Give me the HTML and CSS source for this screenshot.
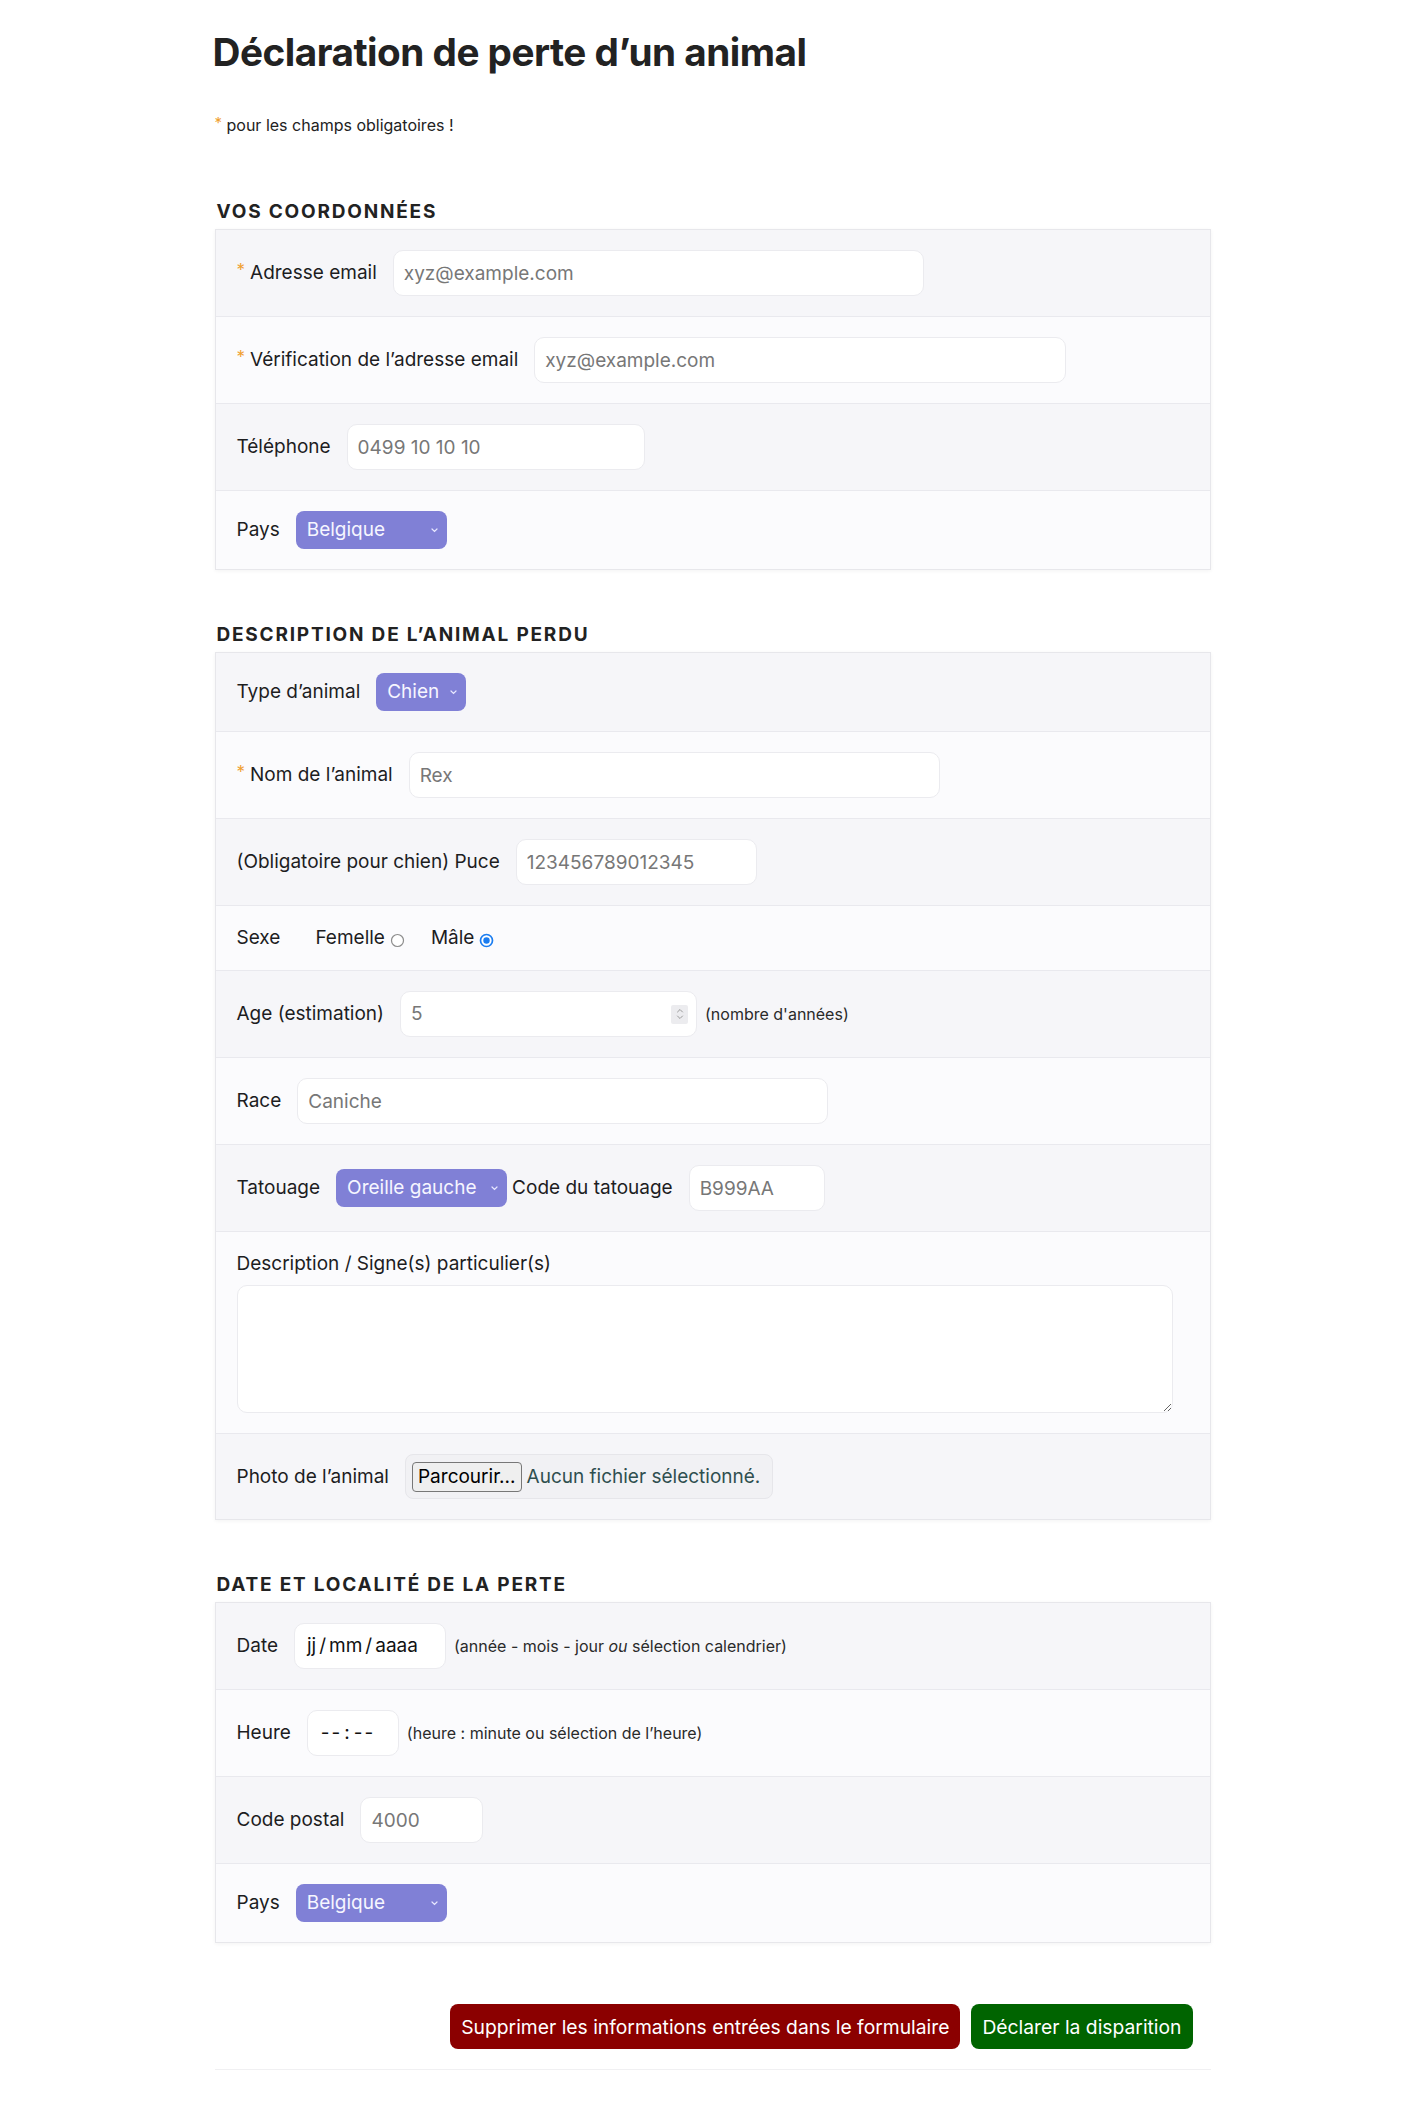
FILE: index.html
```html
<!DOCTYPE html>
<html lang="fr">
<head>
<meta charset="utf-8">
<title>Déclaration de perte d’un animal</title>
<link rel="stylesheet" href="styles.css">
</head>
<body>
<div class="page">
  <h1 class="title">Déclaration de perte d’un animal</h1>
  <p class="note"><span class="req">*</span> pour les champs obligatoires !</p>

  <section class="section">
    <h2 class="section-title">VOS COORDONNÉES</h2>
    <div class="card">
      <div class="row">
        <label class="label"><span class="req">*</span>Adresse email</label>
        <input class="input w-wide" type="text" placeholder="xyz@example.com">
      </div>
      <div class="row">
        <label class="label"><span class="req">*</span>Vérification de l’adresse email</label>
        <input class="input w-wide2" type="text" placeholder="xyz@example.com">
      </div>
      <div class="row">
        <label class="label">Téléphone</label>
        <input class="input w-tel" type="text" placeholder="0499 10 10 10">
      </div>
      <div class="row">
        <label class="label">Pays</label>
        <div class="select w-pays"><span>Belgique</span><svg class="chev" width="7" height="5" viewBox="0 0 7 5"><path d="M1 1l2.5 2.5L6 1" fill="none" stroke="#e8e8ff" stroke-width="1.2" stroke-linecap="round"/></svg></div>
      </div>
    </div>
  </section>

  <section class="section">
    <h2 class="section-title">DESCRIPTION DE L’ANIMAL PERDU</h2>
    <div class="card">
      <div class="row">
        <label class="label">Type d’animal</label>
        <div class="select w-chien"><span>Chien</span><svg class="chev" width="7" height="5" viewBox="0 0 7 5"><path d="M1 1l2.5 2.5L6 1" fill="none" stroke="#e8e8ff" stroke-width="1.2" stroke-linecap="round"/></svg></div>
      </div>
      <div class="row">
        <label class="label"><span class="req">*</span>Nom de l’animal</label>
        <input class="input w-wide" type="text" placeholder="Rex">
      </div>
      <div class="row">
        <label class="label">(Obligatoire pour chien) Puce</label>
        <input class="input w-puce" type="text" placeholder="123456789012345">
      </div>
      <div class="row row-radio">
        <span class="label">Sexe</span>
        <div class="radios">
          <label class="radio">Femelle<svg class="radio-mark" width="15" height="15" viewBox="0 0 15 15"><circle cx="7.5" cy="7.5" r="6" fill="#fff" stroke="#8d8d8d" stroke-width="1.2"/></svg></label>
          <label class="radio">Mâle<svg class="radio-mark" width="15" height="15" viewBox="0 0 15 15"><circle cx="7.5" cy="7.5" r="6" fill="#fff" stroke="#1a7cf0" stroke-width="1.7"/><circle cx="7.5" cy="7.5" r="3.2" fill="#1a7cf0"/></svg></label>
        </div>
      </div>
      <div class="row">
        <label class="label">Age (estimation)</label>
        <div class="input number w-age"><span class="ph">5</span><span class="spin"><svg width="10" height="16" viewBox="0 0 10 16"><path d="M2.5 6l2.5-2.5L7.5 6M2.5 10l2.5 2.5L7.5 10" fill="none" stroke="#9a9a9a" stroke-width="1" stroke-linecap="round" stroke-linejoin="round"/></svg></span></div>
        <span class="hint">(nombre d'années)</span>
      </div>
      <div class="row">
        <label class="label">Race</label>
        <input class="input w-race" type="text" placeholder="Caniche">
      </div>
      <div class="row">
        <label class="label">Tatouage</label>
        <div class="select w-tatoo"><span>Oreille gauche</span><svg class="chev" width="7" height="5" viewBox="0 0 7 5"><path d="M1 1l2.5 2.5L6 1" fill="none" stroke="#e8e8ff" stroke-width="1.2" stroke-linecap="round"/></svg></div>
        <label class="label label-inline">Code du tatouage</label>
        <input class="input w-code" type="text" placeholder="B999AA">
      </div>
      <div class="row row-col">
        <label class="label">Description / Signe(s) particulier(s)</label>
        <textarea class="textarea"></textarea>
      </div>
      <div class="row">
        <label class="label">Photo de l’animal</label>
        <div class="file"><span class="browse">Parcourir...</span><span class="file-text">Aucun fichier sélectionné.</span></div>
      </div>
    </div>
  </section>

  <section class="section">
    <h2 class="section-title">DATE ET LOCALITÉ DE LA PERTE</h2>
    <div class="card">
      <div class="row">
        <label class="label">Date</label>
        <div class="input fake w-date">jj<span class="sl">/</span>mm<span class="sl">/</span>aaaa</div>
        <span class="hint">(année - mois - jour <em>ou</em> sélection calendrier)</span>
      </div>
      <div class="row">
        <label class="label">Heure</label>
        <div class="input fake w-time">--<span class="colon">:</span>--</div>
        <span class="hint">(heure : minute ou sélection de l’heure)</span>
      </div>
      <div class="row">
        <label class="label">Code postal</label>
        <input class="input w-cp" type="text" placeholder="4000">
      </div>
      <div class="row">
        <label class="label">Pays</label>
        <div class="select w-pays"><span>Belgique</span><svg class="chev" width="7" height="5" viewBox="0 0 7 5"><path d="M1 1l2.5 2.5L6 1" fill="none" stroke="#e8e8ff" stroke-width="1.2" stroke-linecap="round"/></svg></div>
      </div>
    </div>
  </section>

  <div class="actions">
    <button class="btn btn-reset" type="button">Supprimer les informations entrées dans le formulaire</button>
    <button class="btn btn-submit" type="button">Déclarer la disparition</button>
  </div>
  <div class="rule"></div>
</div>
</body>
</html>
```

FILE: styles.css
```css
* { box-sizing: border-box; }
html, body { margin: 0; padding: 0; background: #fff; }
body {
  font-family: Inter, "Noto Sans", "Liberation Sans", sans-serif;
  color: #1d1d1f;
}
.page { width: 996px; margin: 0 auto; padding-bottom: 40px; }

.title {
  font-size: 38.7px;
  font-weight: 700;
  line-height: 46px;
  letter-spacing: -0.5px;
  color: #222;
  margin: 29px 0 0 -2px;
}
.note {
  font-size: 16px;
  line-height: 20px;
  margin: 40px 0 0;
  color: #222;
}
.req {
  color: #f0a030;
  font-size: 17px;
  position: relative;
  top: -3px;
  margin-right: 5px;
}
.note .req { margin-right: 0; font-size: 15px; }

.section { margin-top: 54px; }
.note + .section { margin-top: 65px; }
.section-title {
  font-size: 19px;
  line-height: 22px;
  font-weight: 700;
  letter-spacing: 1.8px;
  color: #222;
  margin: 0 0 6px 2px;
}
.card {
  border: 1px solid #e7e7eb;
  box-shadow: 0 1px 4px rgba(0, 0, 0, 0.05);
  background: #fbfbfc;
}
.row {
  display: flex;
  align-items: center;
  padding: 20px 21px;
  font-size: 19px;
  line-height: 24px;
  background: #fbfbfd;
}
.row:nth-child(odd) { background: #f6f6f9; }
.row + .row { border-top: 1px solid #e9e9ee; }
.row-col { display: block; }
.row-col .label { display: block; }

.label { margin-right: 16px; color: #1d1d1f; white-space: nowrap; }
.label-inline { margin-left: 5px; }

.input {
  height: 46px;
  border: 1px solid #ebebef;
  border-radius: 10px;
  background: #fff;
  padding: 0 10px;
  font: inherit;
  font-size: 19px;
  color: #1d1d1f;
  outline: none;
}
.input::placeholder { color: #777; }
.w-wide { width: 531px; }
.w-wide2 { width: 532px; }
.w-tel { width: 298px; }
.w-puce { width: 241px; }
.w-age { width: 297px; }
.w-race { width: 531px; }
.w-code { width: 136px; }
.w-date { width: 152px; }
.w-time { width: 92px; }
.w-cp { width: 123px; }

.number { display: flex; align-items: center; justify-content: space-between; }
.number .ph { color: #777; }
.spin {
  display: flex;
  align-items: center;
  justify-content: center;
  width: 17px;
  height: 19px;
  background: #ececef;
  border-radius: 2px;
  margin-right: -2px;
}
.hint { font-size: 16px; color: #2a2a2a; margin-left: 8px; }
.hint em { font-style: italic; }

.fake { display: flex; align-items: center; color: #111; }
.w-date { padding-left: 12px; }
.sl { margin: 0 3px; }
.w-time { padding-left: 13px; letter-spacing: 2px; }
.colon { margin: 0 2px; }

.select {
  height: 38px;
  border-radius: 8px;
  background: #8080d6;
  color: #f6f6ff;
  display: flex;
  align-items: center;
  justify-content: space-between;
  padding: 0 9px 0 11px;
}
.chev { flex: none; }
.w-pays { width: 151px; }
.w-chien { width: 90px; }
.w-tatoo { width: 171px; }

.radios { display: flex; align-items: center; margin-left: 19px; }
.radio { display: inline-flex; align-items: center; }
.radio + .radio { margin-left: 26px; }
.radio-mark { margin-left: 5px; position: relative; top: 2px; }

.textarea {
  display: block;
  width: 936px;
  height: 128px;
  margin-top: 9px;
  border: 1px solid #ebebef;
  border-radius: 10px;
  background: #fff;
  font: inherit;
  outline: none;
  resize: both;
}

.file {
  height: 45px;
  display: flex;
  align-items: center;
  padding: 0 6px;
  background: #f1f1f4;
  border: 1px solid #e6e6ea;
  border-radius: 8px;
}
.browse {
  height: 30px;
  display: inline-flex;
  align-items: center;
  padding: 0 5px;
  background: #efefef;
  border: 1px solid #777;
  border-radius: 4px;
  color: #000;
  font-size: 19px;
}
.file-text { color: #2f4f4f; margin-left: 5px; margin-right: 6px; }

.actions {
  display: flex;
  justify-content: flex-end;
  gap: 11px;
  margin-top: 61px;
  padding-right: 18px;
}
.btn {
  height: 45px;
  padding: 0 11px;
  border: none;
  border-radius: 8px;
  color: #fff;
  font-family: inherit;
  font-size: 19.3px;
}
.btn-reset { background: #8b0000; }
.btn-submit { background: #006400; }
.rule { margin-top: 20px; border-top: 1px solid #f0f0f2; }
```
